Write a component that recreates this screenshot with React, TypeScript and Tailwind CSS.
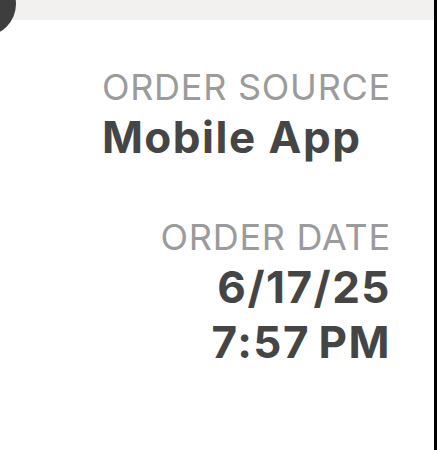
import React from "react";

const Field: React.FC<{ label: string; lines: string[]; align: "left" | "right"; className?: string }> = ({
  label,
  lines,
  align,
  className = "",
}) => (
  <div className={`${align === "left" ? "text-left" : "text-right"} ${className}`}>
    <div className="text-[36px] leading-[40px] text-[#9b9b9b] tracking-[0.75px]">{label}</div>
    <div className="mt-[3px] text-[44px] leading-[55px] font-bold text-[#454545] tracking-[1.5px]">
      {lines.map((l) => (
        <div key={l}>{l}</div>
      ))}
    </div>
  </div>
);

export default function App() {
  return (
    <div
      className="relative w-[437px] h-[450px] overflow-hidden bg-white flex"
      style={{ fontFamily: "Inter, 'Noto Sans', sans-serif" }}
    >
      <div className="absolute -left-[48px] -top-[28px] w-[64px] h-[64px] rounded-full bg-[#3e3e3e]" />
      <div className="flex-1 flex flex-col">
        <div className="h-[20px] bg-[#f2f1ef]" />
        <div className="flex flex-col items-end pt-[47px] pr-[43px]">
          <Field label="ORDER SOURCE" lines={["Mobile App"]} align="left" />
          <Field className="mt-[52px]" label="ORDER DATE" lines={["6/17/25", "7:57\u202FPM"]} align="right" />
        </div>
      </div>
      <div className="w-[3px] bg-black" />
    </div>
  );
}
